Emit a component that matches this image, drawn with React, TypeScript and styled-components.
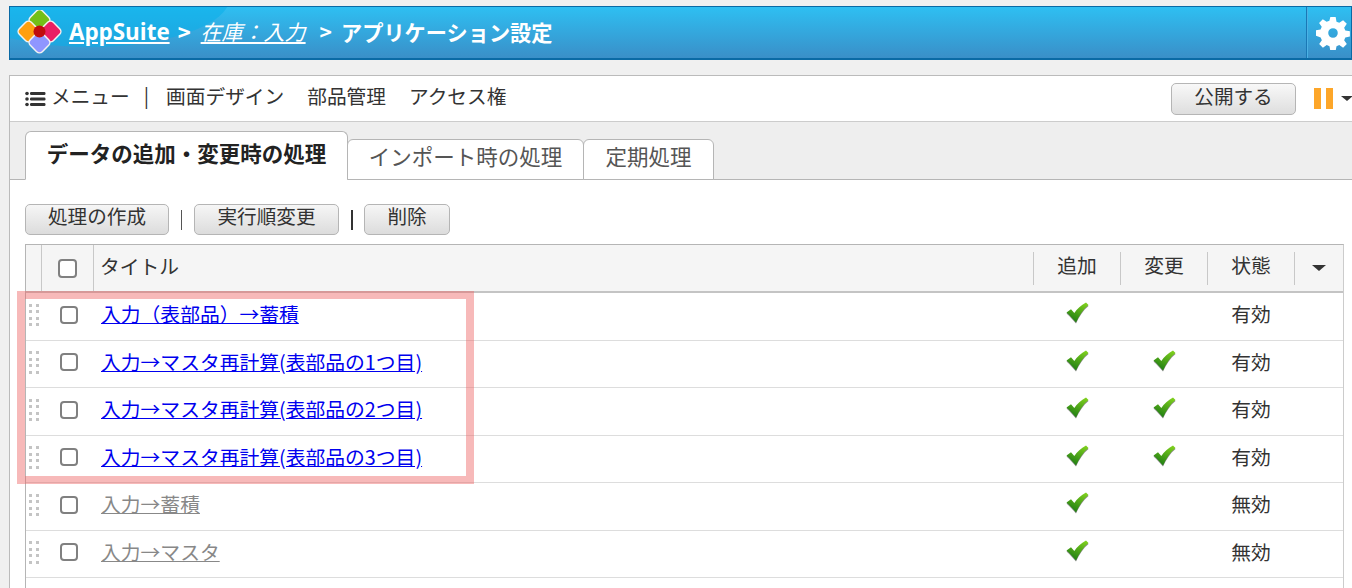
import React from 'react';
import styled, { createGlobalStyle } from 'styled-components';

const FONT = '"Noto Sans CJK JP", "Liberation Sans", sans-serif';

const GlobalStyle = createGlobalStyle`
	html, body {
		margin: 0;
		padding: 0;
		height: 588px;
		overflow: hidden;
		background: #f0f0f0;
		font-family: ${FONT};
		color: #333;
	}
`;

const Page = styled.div`
	position: relative;
	padding: 6px 0 0 9px;
	width: 1352px;
	height: 588px;
	box-sizing: border-box;
	overflow: hidden;
`;

const Header = styled.header`
	display: flex;
	align-items: center;
	height: 54px;
	box-sizing: border-box;
	border: 1px solid #0a6aa5;
	border-bottom-width: 2px;
	background: linear-gradient(#2ebff2, #3a8fc8);
	position: relative;
	overflow: hidden;
`;

const HeaderGloss = styled.div`
	position: absolute;
	left: -60px;
	top: -60px;
	width: 280px;
	height: 100px;
	border-radius: 50%;
	background: #0aaeea;
	opacity: 0.55;
`;

const Crumbs = styled.div`
	display: flex;
	align-items: center;
	flex: 1;
	position: relative;
	padding: 0 0 3px 7px;
	color: #fff;
	font-size: 21px;
	font-weight: 700;
	white-space: nowrap;
`;

const LogoBox = styled.span`
	display: flex;
	margin-top: 3px;
`;

const AppLink = styled.a`
	color: #fff;
	text-decoration: underline;
	font-family: "Open Sans", ${FONT};
	margin-left: 6px;
	font-size: 22.4px;
`;

const Sep = styled.span`
	margin: 0 10px 0 8px;
	font-size: 22px;
`;

const ItalicLink = styled.a`
	color: #fff;
	text-decoration: underline;
	font-style: italic;
	font-weight: 400;
	margin-right: 14px;
`;

const PageTitle = styled.span`
	margin-left: 9px;
	font-size: 21.2px;
`;

const GearBox = styled.div`
	display: flex;
	align-items: center;
	justify-content: center;
	width: 45px;
	height: 100%;
	margin-left: auto;
	position: relative;
	border-left: 1px solid #1a78b5;
	box-shadow: inset 1px 0 0 #4cb2e4;
	padding-left: 8px;
	box-sizing: border-box;
	flex-shrink: 0;
`;

const Panel = styled.section`
	margin-top: 15px;
	height: 600px;
	box-sizing: border-box;
	border: 1px solid #bbb;
	border-right: none;
	background: #fff;
`;

const Toolbar = styled.div`
	display: flex;
	align-items: center;
	height: 45px;
	padding-left: 15px;
	font-size: 19.7px;
	color: #333;
	white-space: nowrap;
`;

const MenuItem = styled.span<{ $gap?: number }>`
	margin-right: ${(p) => p.$gap ?? 23}px;
	padding-bottom: 7px;
`;

const MenuIcon = styled.span`
	display: inline-flex;
	margin-right: 5px;
`;

const Publish = styled.button`
	height: 32px;
	width: 125px;
	margin-left: auto;
	margin-right: 18px;
	padding: 0 0 6px;
	line-height: 1;
	border: 1px solid #b5b5b5;
	border-radius: 5px;
	background: linear-gradient(#f8f8f8, #dedede);
	font-family: ${FONT};
	font-size: 19.6px;
	color: #333;
`;

const PauseBars = styled.div`
	display: flex;
	gap: 5px;
	margin-right: 8px;
`;

const PauseBar = styled.span`
	width: 7px;
	height: 21px;
	background: #fda629;
`;

const Caret = styled.span<{ $w: number; $clip?: boolean }>`
	display: inline-block;
	flex-shrink: 0;
	width: 0;
	height: 0;
	margin-right: ${(p) => (p.$clip ? -1 : 0)}px;
	border-left: ${(p) => p.$w}px solid transparent;
	border-right: ${(p) => p.$w}px solid transparent;
	border-top: ${(p) => p.$w - 1}px solid #333;
`;

const TabStrip = styled.div`
	display: flex;
	align-items: flex-end;
	height: 59px;
	box-sizing: border-box;
	padding-left: 15px;
	background: #eee;
	border-top: 1px solid #ccc;
	border-bottom: 1px solid #b5b5b5;
`;

const Tab = styled.div<{ $active?: boolean; $w: number }>`
	display: flex;
	align-items: center;
	justify-content: center;
	box-sizing: border-box;
	width: ${(p) => p.$w}px;
	height: ${(p) => (p.$active ? 49 : 41)}px;
	margin-bottom: -1px;
	margin-right: -1px;
	border: 1px solid #b5b5b5;
	border-bottom: ${(p) => (p.$active ? '1px solid #fff' : '1px solid #b5b5b5')};
	border-radius: 6px 6px 0 0;
	background: #fff;
	font-size: 21.5px;
	line-height: 1;
	font-weight: ${(p) => (p.$active ? 700 : 400)};
	color: ${(p) => (p.$active ? '#222' : '#555')};
	padding-bottom: ${(p) => (p.$active ? 5 : 7)}px;
	white-space: nowrap;
`;

const Body = styled.div`
	padding: 24px 0 0 15px;
`;

const Actions = styled.div`
	display: flex;
	align-items: center;
	height: 31px;
	margin-bottom: 9px;
`;

const ActionButton = styled.button<{ $w: number }>`
	width: ${(p) => p.$w}px;
	height: 31px;
	padding: 0 0 7px;
	line-height: 1;
	border: 1px solid #b5b5b5;
	border-radius: 5px;
	background: linear-gradient(#f6f6f6, #dcdcdc);
	font-family: ${FONT};
	font-size: 19.6px;
	color: #333;
`;

const ActionSep = styled.span<{ $thick?: boolean }>`
	width: ${(p) => (p.$thick ? 2 : 1)}px;
	height: 20px;
	background: ${(p) => (p.$thick ? '#333' : '#555')};
	margin: 0 ${(p) => (p.$thick ? 11.5 : 12)}px;
`;

const Table = styled.div`
	width: 1319px;
	min-height: 400px;
	box-sizing: border-box;
	border-left: 1px solid #b5b5b5;
	border-right: 1px solid #ccc;
	border-top: 1px solid #b5b5b5;
`;

const Columns = styled.div`
	display: grid;
	grid-template-columns: 16px 52px 1fr 87px 87px 87px 49px;
	align-items: center;
`;

const HeadRow = styled(Columns)`
	height: 48px;
	background: #f5f5f5;
	box-sizing: border-box;
	border-bottom: 2px solid #c4c4c4;
	font-size: 19.8px;
	color: #333;
`;

const HeadCell = styled.div<{ $rule?: boolean }>`
	display: flex;
	align-items: center;
	justify-content: center;
	height: 100%;
	box-sizing: border-box;
	border-right: ${(p) => (p.$rule ? '1px solid #c8c8c8' : 'none')};
`;

const TitleHead = styled(HeadCell)`
	justify-content: flex-start;
	padding: 0 0 5px 6px;
`;

const LabelCell = styled.div`
	display: flex;
	align-items: center;
	justify-content: center;
	height: 33px;
	border-left: 1px solid #c8c8c8;
	box-sizing: border-box;
	padding-bottom: 6px;
	line-height: 1;
`;

const CaretCell = styled(LabelCell)`
	padding-bottom: 0;
`;

const Row = styled(Columns)`
	height: 47.5px;
	box-sizing: border-box;
	border-bottom: 1px solid #ddd;
	font-size: 19.8px;
	padding-bottom: 3px;
`;

const Cell = styled.div`
	display: flex;
	align-items: center;
	justify-content: center;
`;

const Grip = styled.div`
	display: grid;
	grid-template-columns: 3px 3px;
	gap: 3.5px 4px;
`;

const GripDot = styled.span`
	width: 3px;
	height: 3px;
	background: #c4c4c4;
`;

const Check = styled.span<{ $big?: boolean }>`
	display: block;
	width: ${(p) => (p.$big ? 19 : 18)}px;
	height: ${(p) => (p.$big ? 19 : 18)}px;
	margin-left: ${(p) => (p.$big ? 0 : 1)}px;
	box-sizing: border-box;
	border: 2px solid #808080;
	border-radius: 4px;
	background: #fff;
`;

const TitleCell = styled.div`
	padding: 0 0 2px 7px;
	white-space: nowrap;
`;

const TitleLink = styled.a<{ $off?: boolean }>`
	color: ${(p) => (p.$off ? '#888' : '#0000ee')};
	text-decoration: underline;
`;

const StatusCell = styled(Cell)`
	color: #333;
	padding: 0 0 2px 1px;
`;

const TickBox = styled.span`
	display: flex;
	margin: 0 0 4px 1px;
	filter: drop-shadow(0 1px 0.6px rgba(0, 0, 0, 0.45));
`;

const Highlight = styled.div`
	position: absolute;
	left: 17px;
	top: 291px;
	width: 457px;
	height: 193px;
	box-sizing: border-box;
	border: 8px solid rgba(238, 100, 100, 0.45);
	pointer-events: none;
`;

const Gear = () => (
	<svg width="34" height="34" viewBox="0 0 32 32">
		<path
			fill="#fff"
			fillRule="evenodd"
			d="M13.5 1h5l.8 4.3 2.6 1.1 3.6-2.5 3.500 3.500-2.500 3.600 1.100 2.600 4.300.8v5l-4.300.8-1.100 2.600 2.500 3.600-3.500 3.500-3.600-2.500-2.600 1.100-.8 4.300h-5l-.8-4.300-2.600-1.100-3.600 2.500-3.500-3.500 2.500-3.600-1.100-2.600L0 18.500v-5l4.300-.8 1.100-2.600-2.500-3.600 3.500-3.500 3.600 2.500 2.600-1.100zM16 11.500a4.500 4.500 0 1 0 0 9 4.500 4.500 0 0 0 0-9z"
		/>
	</svg>
);

const Logo = () => (
	<svg width="46" height="46" viewBox="0 0 46 46">
		<g stroke="#f2f2f2" strokeWidth="1.5">
			<rect x="14" y="1.5" width="17" height="17" rx="4" fill="#74bf17" transform="rotate(45 22.5 10)" />
			<rect x="3" y="13" width="17" height="17" rx="4" fill="#ff9f0f" transform="rotate(45 11.5 21.5)" />
			<rect x="25" y="13" width="17" height="17" rx="4" fill="#e91e63" transform="rotate(45 33.5 21.5)" />
			<rect x="14" y="24" width="17" height="17" rx="4" fill="#8f96ff" transform="rotate(45 22.5 32.5)" />
		</g>
		<circle cx="22.5" cy="21.5" r="6" fill="#c00d0d" />
	</svg>
);

const ListIcon = () => (
	<svg width="21" height="16" viewBox="0 0 21 16">
		<g fill="#333">
			<circle cx="2" cy="2.500" r="1.800" />
			<circle cx="2" cy="8" r="1.800" />
			<circle cx="2" cy="13.500" r="1.800" />
			<rect x="5" y="1" width="15.500" height="3" rx="1.200" />
			<rect x="5" y="6.500" width="15.500" height="3" rx="1.200" />
			<rect x="5" y="12" width="15.500" height="3" rx="1.200" />
		</g>
	</svg>
);

const Tick = () => (
	<TickBox>
		<svg width="23" height="21" viewBox="0 0 23 21">
			<defs>
				<linearGradient id="tick" x1="0.8" y1="0" x2="0.3" y2="1">
					<stop offset="0" stopColor="#7fd01e" />
					<stop offset="1" stopColor="#1b7a12" />
				</linearGradient>
			</defs>
			<path
				fill="url(#tick)"
				d="M0.500 10.500l4.500-3.200 3.300 3.700C11 7 15 3 20 0.500l2.500 2.500C17 7.500 13.500 13 10 20.500 6.500 16.500 4 13.500 0.500 10.500z"
			/>
		</svg>
	</TickBox>
);

const rows = [
	{ title: '入力（表部品）→蓄積', change: false },
	{ title: '入力→マスタ再計算(表部品の1つ目)', change: true },
	{ title: '入力→マスタ再計算(表部品の2つ目)', change: true },
	{ title: '入力→マスタ再計算(表部品の3つ目)', change: true },
	{ title: '入力→蓄積', change: false, off: true },
	{ title: '入力→マスタ', change: false, off: true }
];

export default function App() {
	return (
		<Page>
			<GlobalStyle />
			<Header>
				<HeaderGloss />
				<Crumbs>
					<LogoBox>
						<Logo />
					</LogoBox>
					<AppLink>AppSuite</AppLink>
					<Sep>&gt;</Sep>
					<ItalicLink>在庫：入力</ItalicLink>
					<span>&gt;</span>
					<PageTitle>アプリケーション設定</PageTitle>
				</Crumbs>
				<GearBox>
					<Gear />
				</GearBox>
			</Header>
			<Panel>
				<Toolbar>
					<MenuIcon>
						<ListIcon />
					</MenuIcon>
					<MenuItem $gap={14}>メニュー</MenuItem>
					<MenuItem $gap={17}>|</MenuItem>
					<MenuItem>画面デザイン</MenuItem>
					<MenuItem>部品管理</MenuItem>
					<MenuItem>アクセス権</MenuItem>
					<Publish>公開する</Publish>
					<PauseBars>
						<PauseBar />
						<PauseBar />
					</PauseBars>
					<Caret $w={6} $clip />
				</Toolbar>
				<TabStrip>
					<Tab $active $w={323}>
						データの追加・変更時の処理
					</Tab>
					<Tab $w={237}>インポート時の処理</Tab>
					<Tab $w={131}>定期処理</Tab>
				</TabStrip>
				<Body>
					<Actions>
						<ActionButton $w={144}>処理の作成</ActionButton>
						<ActionSep />
						<ActionButton $w={145}>実行順変更</ActionButton>
						<ActionSep $thick />
						<ActionButton $w={86}>削除</ActionButton>
					</Actions>
					<Table>
						<HeadRow>
							<HeadCell $rule />
							<HeadCell $rule>
								<Check $big />
							</HeadCell>
							<TitleHead>タイトル</TitleHead>
							<LabelCell>追加</LabelCell>
							<LabelCell>変更</LabelCell>
							<LabelCell>状態</LabelCell>
							<CaretCell>
								<Caret $w={7} />
							</CaretCell>
						</HeadRow>
						{rows.map((row) => (
							<Row key={row.title}>
								<Cell>
									<Grip>
										{Array.from({ length: 8 }, (_, i) => (
											<GripDot key={i} />
										))}
									</Grip>
								</Cell>
								<Cell>
									<Check />
								</Cell>
								<TitleCell>
									<TitleLink $off={row.off}>{row.title}</TitleLink>
								</TitleCell>
								<Cell>
									<Tick />
								</Cell>
								<Cell>{row.change ? <Tick /> : null}</Cell>
								<StatusCell>{row.off ? '無効' : '有効'}</StatusCell>
								<Cell />
							</Row>
						))}
					</Table>
				</Body>
			</Panel>
			<Highlight />
		</Page>
	);
}
